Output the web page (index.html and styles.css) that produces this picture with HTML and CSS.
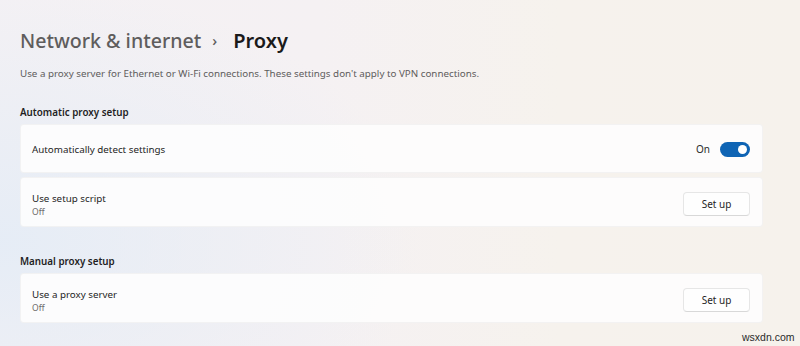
FILE: index.html
```html
<!DOCTYPE html>
<html>
<head>
<meta charset="utf-8">
<link rel="stylesheet" href="styles.css">
</head>
<body>
<div class="page">
  <h1 class="title"><span class="crumb">Network &amp; internet</span><span class="chev">›</span><span class="current">Proxy</span></h1>
  <p class="desc">Use a proxy server for Ethernet or Wi-Fi connections. These settings don't apply to VPN connections.</p>

  <h2 class="section">Automatic proxy setup</h2>
  <div class="card">
    <div class="label"><div class="name">Automatically detect settings</div></div>
    <div class="ctrl"><span class="state">On</span><span class="toggle"><span class="knob"></span></span></div>
  </div>
  <div class="card tall">
    <div class="label two"><div class="name">Use setup script</div><div class="sub">Off</div></div>
    <div class="ctrl btnwrap"><button class="btn">Set up</button></div>
  </div>

  <h2 class="section second">Manual proxy setup</h2>
  <div class="card tall">
    <div class="label two"><div class="name">Use a proxy server</div><div class="sub">Off</div></div>
    <div class="ctrl btnwrap"><button class="btn">Set up</button></div>
  </div>
</div>
<div class="watermark">wsxdn.com</div>
</body>
</html>
```
FILE: styles.css
```css
html, body { margin: 0; padding: 0; }
body {
  width: 800px;
  height: 346px;
  overflow: hidden;
  position: relative;
  font-family: "Noto Sans", "Open Sans", sans-serif;
  color: #1b1b1b;
  background:
    radial-gradient(ellipse 420px 260px at 0% 70%, rgba(228,236,246,0.9), rgba(228,236,246,0) 100%),
    linear-gradient(90deg, #f4f1f4 0%, #f5f1f3 40%, #f6f2ed 70%, #f6f2ec 100%);
}
.page { padding: 27px 37px 0 20px; }
.title {
  margin: 0;
  font-size: 19.6px;
  font-weight: 500;
  line-height: 28px;
  display: flex;
  align-items: baseline;
}
.crumb { color: #5f5d5d; }
.chev { color: #5d5b5b; font-size: 15px; margin: 0 16px 0 11px; position: relative; top: -2px; }
.current { color: #1a1a1a; font-weight: 600; font-size: 20px; }
.desc {
  margin: 11px 0 0;
  font-size: 9.8px;
  line-height: 14px;
  color: #5e5c5c;
}
.section {
  margin: 25px 0 0;
  font-size: 9.8px;
  font-weight: 600;
  line-height: 14px;
  color: #1f1f1f;
}
.section.second { margin-top: 28px; }
.card {
  margin-top: 4px;
  height: 49px;
  box-sizing: border-box;
  background: rgba(253,253,253,0.92);
  border: 1px solid rgba(0,0,0,0.04);
  border-radius: 4px;
  display: flex;
  align-items: center;
  justify-content: space-between;
  padding: 0 12px 0 11px;
}
.section + .card { margin-top: 4px; }
.card.tall { height: 50px; }
.label { padding-top: 3px; }
.label.two { padding-top: 6px; }
.name { font-size: 9.8px; line-height: 14px; color: #1e1e1e; }
.sub { font-size: 8.5px; line-height: 12px; color: #6a6868; }
.ctrl { display: flex; align-items: center; padding-top: 1px; }
.btnwrap { padding-top: 3px; }
.state { font-size: 10px; color: #2a2a2a; margin-right: 10px; }
.toggle {
  width: 30px; height: 15px;
  border-radius: 8px;
  background: #0f64b4;
  position: relative;
}
.knob {
  position: absolute;
  right: 3px; top: 3px;
  width: 9px; height: 9px;
  border-radius: 50%;
  background: #fff;
}
.btn {
  width: 67px; height: 24px;
  font-family: inherit;
  font-size: 10px;
  color: #1e1e1e;
  background: #fefefe;
  border: 1px solid #e6e6e6;
  border-bottom-color: #d8d8d8;
  border-radius: 4px;
  padding: 0;
}
.watermark {
  position: absolute;
  left: 742px; top: 331px;
  font-family: "Liberation Sans", Arial, sans-serif;
  font-size: 10.5px;
  color: #2a2a2a;
}
```
